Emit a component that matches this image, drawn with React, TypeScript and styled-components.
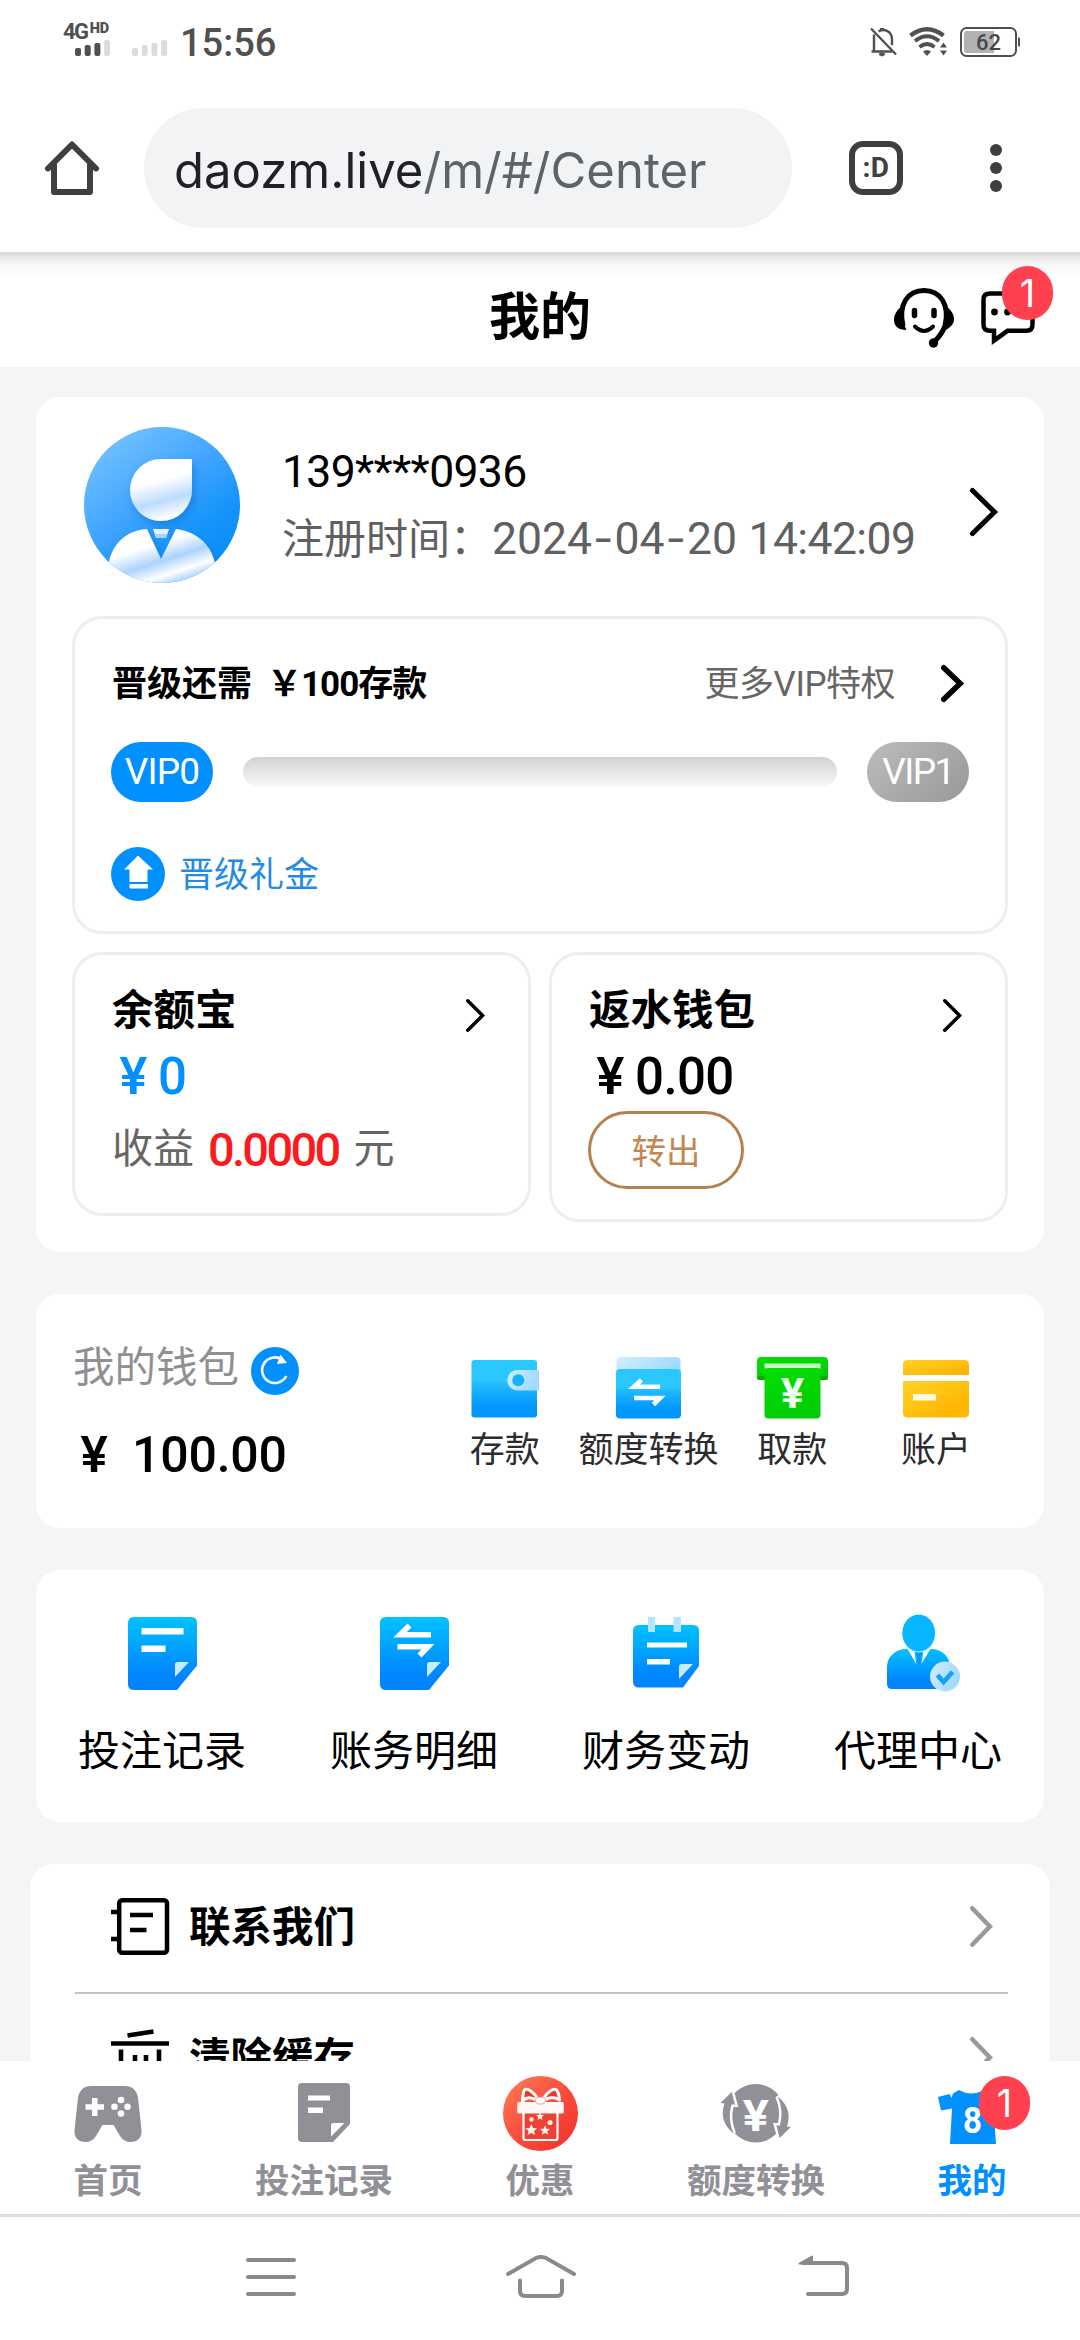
import React from "react";
import styled, { createGlobalStyle } from "styled-components";

const FONT = `Roboto, "Noto Sans CJK SC", sans-serif`;
const BLUE = "#0090ff";

const GlobalStyle = createGlobalStyle`
  * { box-sizing: border-box; }
  body { margin: 0; background: #fff; font-family: ${FONT}; color: #000; }
  #root { height: 2340px; }
  svg { display: block; flex: none; overflow: visible; }
`;

const Screen = styled.div`
  width: 1080px;
  height: 2340px;
  display: flex;
  flex-direction: column;
  overflow: hidden;
  background: #fff;
`;

/* ---------- status bar ---------- */

const StatusBar = styled.div`
  height: 84px;
  flex: none;
  display: flex;
  justify-content: space-between;
  align-items: flex-start;
  padding: 23px 60px 0 63px;
  color: #505050;
`;
const StatusGroup = styled.div`
  display: flex;
  align-items: flex-start;
`;
const StatusIcons = styled(StatusGroup)`
  gap: 12px;
  padding-top: 4px;
`;
const Signal = styled.div`
  width: 117px;
  height: 34px;
`;
const NetworkLabel = styled.div`
  font: 700 22px/18px ${FONT};
  letter-spacing: -1.5px;
  height: 16px;
  display: flex;
`;
const HdMark = styled.span`
  font: 900 14.5px/11px ${FONT};
  letter-spacing: 0;
  margin-left: 2px;
`;
const Clock = styled.div`
  font: 500 38px/40px ${FONT};
`;

/* ---------- browser toolbar ---------- */

const Toolbar = styled.div`
  height: 168px;
  flex: none;
  display: flex;
  align-items: center;
  padding: 0 78px 0 45px;
`;
const AddressBar = styled.div`
  width: 648px;
  height: 120px;
  margin: 0 57px 0 45px;
  padding-left: 30px;
  border-radius: 60px;
  background: #f1f3f5;
  color: #5f6368;
  font: 400 49px/126px Inter, sans-serif;
  letter-spacing: 0.03px;
  white-space: nowrap;
`;
const Host = styled.span`
  color: #202124;
`;
const TabSwitcher = styled.div`
  width: 54px;
  height: 54px;
  border: 6px solid #3c4043;
  border-radius: 14px;
  color: #3c4043;
  font: 700 28px/42px ${FONT};
  letter-spacing: 0.5px;
  text-align: center;
  margin-right: 87px;
`;

/* ---------- page header ---------- */

const PageHeader = styled.div`
  height: 115px;
  flex: none;
  display: grid;
  grid-template-columns: 1fr auto 1fr;
  background: linear-gradient(#d6d6d6 0, #ececec 6px, #f8f8f8 14px, #fff 24px);
`;
const PageTitle = styled.h1`
  grid-column: 2;
  margin: 0;
  font: 700 51px/132px ${FONT};
`;
const HeaderActions = styled.div`
  display: flex;
  justify-content: flex-end;
  gap: 27px;
  padding: 36px 45px 0 0;
`;
const BadgeHost = styled.div`
  position: relative;
`;
const Badge = styled.span<{ $left: number; $top: number }>`
  position: absolute;
  left: ${(p) => p.$left}px;
  top: ${(p) => p.$top}px;
  width: 51px;
  height: 54px;
  border-radius: 26px;
  background: #ff404f;
  color: #fff;
  font: 400 38px/54px Inter, sans-serif;
  text-align: center;
`;

/* ---------- content ---------- */

const Content = styled.main`
  height: 1694px;
  flex: none;
  overflow: hidden;
  display: flex;
  flex-direction: column;
  background: #f4f5f7;
  padding: 30px 36px 0;
`;
const Card = styled.section`
  flex: none;
  background: #fff;
  border-radius: 24px;
`;
const ProfileCard = styled(Card)`
  height: 855px;
  padding: 30px 36px 0;
`;
const Profile = styled.div`
  display: flex;
  height: 189px;
  padding: 0 10px 0 12px;
`;
const ProfileText = styled.div`
  flex: 1;
  padding: 19px 0 0 42px;
`;
const Phone = styled.div`
  font: 400 44.5px/52px ${FONT};
  letter-spacing: -0.65px;
`;
const Registered = styled.div`
  margin-top: 14px;
  font: 400 42px/52px ${FONT};
  color: #606062;
  white-space: nowrap;
`;
const RegisteredDate = styled.span`
  font-size: 44.5px;
`;
const DateDash = styled.span`
  font-family: Inter, sans-serif;
  margin: 0 1px;
`;
const RegisteredTime = styled.span`
  font-size: 44.5px;
  letter-spacing: -0.6px;
  margin-left: 1px;
`;
const ProfileArrow = styled.div`
  padding-top: 61px;
`;

const Panel = styled.div`
  border: 3px solid #eee;
  border-radius: 30px;
`;
const VipPanel = styled(Panel)`
  height: 318px;
  padding: 43px 36px 0;
`;
const VipHead = styled.div`
  display: flex;
  justify-content: space-between;
  align-items: center;
  height: 46px;
  padding-right: 5px;
  font: 400 35px/46px ${FONT};
`;
const VipNeed = styled.div`
  display: flex;
  gap: 15px;
  padding-left: 1px;
  font-weight: 700;
`;
const VipAmount = styled.span`
  font-weight: 700;
  letter-spacing: -1px;
`;
const VipMore = styled.div`
  display: flex;
  align-items: center;
  gap: 46px;
  color: #666;
  letter-spacing: -0.5px;
`;
const VipArrow = styled.div`
  padding-bottom: 4px;
`;
const VipTrack = styled.div`
  display: flex;
  align-items: center;
  justify-content: space-between;
  margin-top: 34px;
`;
const VipLevel = styled.span<{ $active?: boolean }>`
  width: 102px;
  height: 60px;
  border-radius: 30px;
  background: ${(p) => (p.$active ? BLUE : "linear-gradient(135deg, #bcbcbc, #989898)")};
  color: #fff;
  font: 400 37px/60px ${FONT};
  letter-spacing: ${(p) => (p.$active ? -0.8 : -1.6)}px;
  text-align: center;
`;
const VipBar = styled.span`
  width: 594px;
  height: 30px;
  border-radius: 15px;
  background: linear-gradient(#d2d2d2, #fafafa);
`;
const VipGift = styled.div`
  display: flex;
  align-items: center;
  gap: 14px;
  margin-top: 43px;
  color: #1f8ce6;
  font: 400 35px/54px ${FONT};
`;
const VipGiftLabel = styled.span`
  padding-top: 4px;
`;

const Wallets = styled.div`
  display: grid;
  grid-template-columns: 1fr 1fr;
  align-items: start;
  gap: 18px;
  margin-top: 18px;
`;
const WalletPanel = styled(Panel)<{ $height: number }>`
  height: ${(p) => p.$height}px;
  padding: 28px 43px 0 37px;
`;
const WalletHead = styled.div`
  display: flex;
  justify-content: space-between;
  align-items: center;
  height: 56px;
  font: 700 41.5px/56px ${FONT};
`;
const WalletArrow = styled.div`
  padding-top: 8px;
`;
const WalletSum = styled.div<{ $color: string }>`
  height: 61px;
  padding-left: 7px;
  color: ${(p) => p.$color};
  font: 500 51px/74px ${FONT};
  letter-spacing: -0.6px;
  display: flex;
  align-items: baseline;
`;
const Yen = styled.span`
  display: inline-block;
  width: 39px;
  font-family: Inter, sans-serif;
  font-weight: 600;
`;
const Income = styled.div`
  display: flex;
  margin-top: 24px;
  color: #666;
  font: 400 41px/50px ${FONT};
`;
const IncomeValue = styled.span`
  margin: 0 15px 0 14px;
  color: #fb1a1e;
  font: 500 47px/52px ${FONT};
  letter-spacing: -2.7px;
`;
const TransferOut = styled.button`
  display: block;
  width: 156px;
  height: 78px;
  margin: 11px 0 0 -1px;
  padding: 0;
  border: 3px solid #b5804f;
  border-radius: 39px;
  background: #fff;
  color: #c48650;
  font: 400 34.5px/76px ${FONT};
`;

const BalanceCard = styled(Card)`
  height: 234px;
  margin-top: 42px;
  padding-left: 37px;
  display: flex;
`;
const Balance = styled.div`
  width: 360px;
  padding-top: 47px;
`;
const BalanceLabel = styled.div`
  display: flex;
  gap: 12px;
  color: #909094;
  font: 400 41.5px/54px ${FONT};
`;
const RefreshIcon = styled.div`
  padding-top: 6px;
`;
const BalanceSum = styled.div`
  display: flex;
  align-items: baseline;
  gap: 13px;
  margin-top: 32px;
  padding-left: 7px;
  font: 500 50px/54px ${FONT};
  letter-spacing: -0.2px;
`;
const WalletActions = styled.div`
  flex: 1;
  display: grid;
  grid-template-columns: repeat(4, 1fr);
  margin-right: 36px;
`;
const WalletAction = styled.div`
  display: flex;
  flex-direction: column;
  align-items: center;
  padding-top: 63px;
  color: #2c2c2e;
  font: 400 35px/46px ${FONT};
  white-space: nowrap;
`;
const ActionIcon = styled.div`
  height: 71px;
`;

const MenuCard = styled(Card)`
  height: 252px;
  margin-top: 42px;
  display: grid;
  grid-template-columns: repeat(4, 1fr);
`;
const MenuItem = styled.div`
  display: flex;
  flex-direction: column;
  align-items: center;
  padding-top: 45px;
  font: 400 42px/56px ${FONT};
`;
const MenuIcon = styled.div`
  height: 109px;
  padding-top: 2px;
`;

const ListCard = styled(Card)`
  height: 300px;
  margin: 42px -6px 0;
  padding: 0 42px 0 45px;
`;
const ListRow = styled.div<{ $divider?: boolean }>`
  display: flex;
  align-items: center;
  height: 130px;
  padding: 0 15px 4px 36px;
  border-bottom: ${(p) => (p.$divider ? "2px solid #c4c4c6" : "0")};
`;
const ListLabel = styled.div`
  flex: 1;
  margin-left: 20px;
  padding-top: 3px;
  font: 700 41.5px/60px ${FONT};
`;

/* ---------- bottom tabs ---------- */

const TabBar = styled.nav`
  height: 156px;
  flex: none;
  display: grid;
  grid-template-columns: repeat(5, 1fr);
  border-bottom: 3px solid #dedee0;
  background: #fff;
`;
const Tab = styled.div<{ $active?: boolean }>`
  display: flex;
  flex-direction: column;
  align-items: center;
  color: ${(p) => (p.$active ? BLUE : "#909096")};
  font: 700 34.5px/46px ${FONT};
`;
const TabIcon = styled.div<{ $top: number }>`
  height: 97px;
  padding-top: ${(p) => p.$top}px;
  display: flex;
  align-items: flex-start;
`;
const ShirtHost = styled(BadgeHost)`
  margin-right: 10px;
`;

const SystemNav = styled.div`
  height: 123px;
  flex: none;
  display: grid;
  grid-template-columns: 260px 292px auto;
  padding: 38px 0 0 246px;
`;

/* ---------- icons ---------- */

const Chevron = ({ w, h, s, color = "#000" }: { w: number; h: number; s: number; color?: string }) => (
  <svg width={w} height={h}>
    <path
      d={`M${s / 2} ${s / 2} L${w - s * 0.7} ${h / 2} L${s / 2} ${h - s / 2}`}
      fill="none"
      stroke={color}
      strokeWidth={s}
      strokeLinecap="round"
    />
  </svg>
);

const Bars = ({ x, color, last }: { x: number; color: string; last: string }) => (
  <g>
    {[8, 11, 13, 16].map((h, i) => (
      <rect key={h} x={x + i * 9.7} y={17 - h} width={6} height={h} rx={2} fill={i === 3 ? last : color} />
    ))}
  </g>
);

const BellOff = () => (
  <svg width="27" height="30" viewBox="0 0 27 30" fill="none" stroke="#505050" strokeWidth="2.4">
    <path d="M1 1.5 L26 27.5" />
    <path d="M4 7.5V24.5M1.5 24.5H22M8.5 4.5C13 1.500 22 3 22 12.500V18" />
    <path d="M9.500 27h5l-2.500 1.200z" fill="#505050" />
    <path d="M12 1v2" strokeWidth="4" />
  </svg>
);

const Wifi = () => (
  <svg width="39" height="30" viewBox="0 0 39 30" fill="none" stroke="#505050">
    <path d="M1.500 8.500Q18 -4 34.500 8.500" strokeWidth="4.200" />
    <path d="M6 14Q18 4.500 30 14" strokeWidth="4" />
    <path d="M10.500 20Q18 14 25.500 20" strokeWidth="3.800" />
    <path d="M14 24.500Q18 21.500 22 24.500L18 29z" fill="#505050" stroke="none" />
    <path d="M31 20.500l3.500-5 3.500 5zM31 23.500l3.500 5 3.500-5z" fill="#505050" stroke="none" />
  </svg>
);

const Battery = () => (
  <svg width="60" height="30" viewBox="0 0 60 30">
    <rect x="1" y="1" width="55" height="28" rx="5.500" fill="#fff" stroke="#505050" strokeWidth="2" />
    <path d="M6.500 4H34V26H6.500Q4 26 4 23.500V6.500Q4 4 6.500 4Z" fill="#b2b2b2" />
    <path d="M58 10.500h1q1 0 1 1v7q0 1-1 1h-1z" fill="#505050" />
    <text x="28.500" y="23" textAnchor="middle" fontFamily="Roboto" fontSize="22" fontWeight="500" fill="#484848">
      62
    </text>
  </svg>
);

const HomeOutline = () => (
  <svg width="54" height="54" viewBox="0 0 54 54" fill="none" stroke="#3c4043" strokeWidth="6" strokeLinejoin="round" strokeLinecap="round">
    <path d="M3 27.500L27 3.500L51 27.500" />
    <path d="M9 24V51H45V24" />
  </svg>
);

const MoreDots = () => (
  <svg width="12" height="48" viewBox="0 0 12 48" fill="#3c4043">
    <circle cx="6" cy="6" r="6" />
    <circle cx="6" cy="24" r="6" />
    <circle cx="6" cy="42" r="6" />
  </svg>
);

const Headset = () => (
  <svg width="60" height="60" viewBox="0 0 60 60" fill="none" stroke="#000">
    <path d="M9 38C4 16 14 2.500 30 2.500S56 16 51 38Q48 46 41 53" strokeWidth="5" />
    <path d="M9 17C3 22 0 26 0 32C0 38 4 42 12.500 42C10 37 9.500 31 9 17Z" fill="#000" stroke="none" />
    <path d="M51 17C57 22 60 26 60 31.500C60 36 56 40 51 42C50 36 51 31 51 17Z" fill="#000" stroke="none" />
    <circle cx="39.500" cy="55" r="4.700" fill="#000" stroke="none" />
    <path d="M20.500 22.500v5M40 22.500v5" strokeWidth="5.500" strokeLinecap="round" />
    <path d="M21 38.500Q30 47.500 39 38.500" strokeWidth="4" strokeLinecap="round" />
  </svg>
);

const Chat = () => (
  <svg width="54" height="60" viewBox="0 0 54 60" fill="none" stroke="#000" strokeWidth="4.500">
    <path d="M9 5.500H45.500Q51.500 5.500 51.500 11.500V36.500Q51.500 42.800 45.500 42.800H26.500L13 52.500V42.800H9Q2.500 42.800 2.500 36.500V11.500Q2.500 5.500 9 5.500Z" />
    <circle cx="13.500" cy="24" r="3.400" fill="#000" stroke="none" />
    <circle cx="26.500" cy="24" r="3.400" fill="#000" stroke="none" />
  </svg>
);

const Avatar = () => (
  <svg width="156" height="156" viewBox="0 0 156 156">
    <defs>
      <linearGradient id="avBg" x1="0.150" y1="0.050" x2="0.800" y2="0.950">
        <stop offset="0" stopColor="#74c2ff" />
        <stop offset="0.450" stopColor="#40a4ff" />
        <stop offset="0.750" stopColor="#1594fb" />
        <stop offset="1" stopColor="#0a8cf5" />
      </linearGradient>
      <linearGradient id="avHead" x1="0.350" y1="0" x2="0.620" y2="1">
        <stop offset="0.350" stopColor="#fff" />
        <stop offset="0.680" stopColor="#bcdcfe" />
        <stop offset="0.950" stopColor="#fff" />
      </linearGradient>
      <linearGradient id="avBody" gradientUnits="userSpaceOnUse" x1="68" y1="100" x2="86" y2="156">
        <stop offset="0.300" stopColor="#fff" />
        <stop offset="0.600" stopColor="#acd3fc" />
        <stop offset="0.850" stopColor="#fff" />
        <stop offset="1" stopColor="#b5d8fd" />
      </linearGradient>
      <clipPath id="avClip">
        <circle cx="78" cy="78" r="78" />
      </clipPath>
      <filter id="avShadow" x="-0.200" y="-0.200" width="1.500" height="1.500">
        <feDropShadow dx="3" dy="5" stdDeviation="4" floodColor="#0868c8" floodOpacity="0.450" />
      </filter>
    </defs>
    <circle cx="78" cy="78" r="78" fill="url(#avBg)" />
    <g clipPath="url(#avClip)">
      <path d="M24 160C20 122 38 104 63 102L77 132L92 102C116 105 136 122 132 160Z" fill="url(#avBody)" filter="url(#avShadow)" />
    </g>
    <path d="M108 32V63A31 31 0 1 1 77 32Z" fill="url(#avHead)" filter="url(#avShadow)" />
    <path d="M69 102H85L82 111H72Z" fill="#e4f2ff" />
    <path d="M71.500 107H83.500L82 111H72.500Z" fill="#a8d3fb" />
  </svg>
);

const UpIcon = () => (
  <svg width="54" height="54" viewBox="0 0 54 54">
    <circle cx="27" cy="27" r="27" fill={BLUE} />
    <path d="M27 8.500L42 22.500H36.500V35H18.500V22.500H13Z" fill="#fff" />
    <rect x="18.500" y="37" width="18.500" height="4.500" rx="1" fill="#fff" />
  </svg>
);

const Refresh = () => (
  <svg width="48" height="48" viewBox="0 0 48 48">
    <circle cx="24" cy="24" r="24" fill={BLUE} />
    <path d="M31 12.500A12.800 12.800 0 1 0 35.300 29" fill="none" stroke="#fff" strokeWidth="2.600" />
    <path d="M29.500 7.500L36 16L26 17Z" fill="#fff" />
  </svg>
);

const BlueGradients = () => (
  <defs>
    <linearGradient id="skyBlue" x1="0" y1="0" x2="0" y2="1">
      <stop offset="0.350" stopColor="#2ac8ff" />
      <stop offset="0.450" stopColor="#1fb8ff" />
      <stop offset="0.800" stopColor="#0098ff" />
    </linearGradient>
    <linearGradient id="deepBlue" x1="0" y1="0" x2="0" y2="1">
      <stop offset="0" stopColor="#00c2ff" />
      <stop offset="0.800" stopColor="#0085ff" />
      <stop offset="1" stopColor="#0085ff" />
    </linearGradient>
    <linearGradient id="paleBlue" x1="0" y1="0" x2="1" y2="0.400">
      <stop offset="0" stopColor="#d4eeff" />
      <stop offset="1" stopColor="#9fdaff" />
    </linearGradient>
    <linearGradient id="cardGreen" x1="0.200" y1="0" x2="0.500" y2="1">
      <stop offset="0" stopColor="#04de00" />
      <stop offset="1" stopColor="#00cc08" />
    </linearGradient>
    <linearGradient id="cardGold" x1="0" y1="0" x2="0.800" y2="0.800">
      <stop offset="0" stopColor="#ffd22c" />
      <stop offset="1" stopColor="#ffb600" />
    </linearGradient>
  </defs>
);

const DepositIcon = () => (
  <svg width="68" height="60" viewBox="0 0 68 60">
    <BlueGradients />
    <rect x="0.500" y="3" width="65.500" height="57.500" rx="3" fill="url(#skyBlue)" />
    <path d="M68 13H46.500a10.200 10.200 0 0 0 0 20.500H68z" fill="url(#paleBlue)" />
    <circle cx="47.300" cy="23.200" r="6" fill="#15b2ff" />
  </svg>
);

const ConvertIcon = () => (
  <svg width="65" height="61" viewBox="0 0 65 61">
    <path d="M4 0H60Q64 0 64.500 4V18H0.500V4Q0.500 0 4 0Z" fill="url(#paleBlue)" />
    <rect x="0" y="12" width="65" height="49.500" rx="4" fill="url(#skyBlue)" />
    <path d="M44 29.800H18L25.500 23M18 41H44L37.500 47.500" fill="none" stroke="#fff" strokeWidth="4.600" />
  </svg>
);

const WithdrawIcon = () => (
  <svg width="71" height="61" viewBox="0 0 71 61">
    <rect x="0" y="0" width="71" height="23" rx="4" fill="url(#cardGreen)" />
    <rect x="0" y="19" width="71" height="4" rx="2" fill="#0aa80a" />
    <rect x="7.500" y="6.500" width="56" height="5" fill="#c9f8c6" />
    <rect x="7.500" y="11" width="56" height="50.500" rx="4" fill="url(#cardGreen)" />
    <text x="35.600" y="50.500" textAnchor="middle" fontFamily="Inter" fontSize="41" fontWeight="700" fill="#f1fff0" textLength="24" lengthAdjust="spacingAndGlyphs">
      ¥
    </text>
  </svg>
);

const AccountIcon = () => (
  <svg width="66" height="60" viewBox="0 0 66 60">
    <path d="M4.500 3H61.500Q66 3 66 8V18H0V8Q0 3 4.500 3Z" fill="url(#cardGold)" />
    <path d="M0 24H66V55.500Q66 60.500 61.500 60.500H4.500Q0 60.500 0 55.500Z" fill="url(#cardGold)" />
    <rect x="10" y="37" width="23" height="6.500" fill="#fffbe0" />
  </svg>
);

const DOC = "M6 0H63Q69 0 69 6V48.500L49 73H6Q0 73 0 67V6Q0 0 6 0Z";

const BetIcon = () => (
  <svg width="69" height="73" viewBox="0 0 69 73">
    <path d={DOC} fill="url(#deepBlue)" />
    <path d="M13.500 11h42v6.500h-42zM13.500 28.500h24V35h-24z" fill="#fff" />
    <path d="M47 47.500q0-2.500 2.500-2.500H61L47 60z" fill="#c8ecff" />
  </svg>
);

const LedgerIcon = () => (
  <svg width="69" height="73" viewBox="0 0 69 73">
    <path d={DOC} fill="url(#deepBlue)" />
    <path d="M51 17.800H20L29.500 8.500M17.500 29.700H48L39.500 38.500" fill="none" stroke="#fff" strokeWidth="5.500" />
    <path d="M47 47.500q0-2.500 2.500-2.500H61L47 60z" fill="#c8ecff" />
  </svg>
);

const FinanceIcon = () => (
  <svg width="66" height="73" viewBox="0 0 66 73">
    <path d="M6 8H60Q66 8 66 14V49L50 70.500H6Q0 70.500 0 64.500V14Q0 8 6 8Z" fill="url(#deepBlue)" />
    <path d="M15 0h7v15h-7zM40.500 0h7.500v15h-7.500z" fill="#b4e4ff" />
    <path d="M14 25.500h40v5H14zM14 42h23v5.500H14z" fill="#fff" />
    <path d="M46 49.500q0-2.500 2.500-2.500H60L46 62z" fill="#c8ecff" />
  </svg>
);

const AgentIcon = () => (
  <svg width="63" height="74" viewBox="0 2 63 74">
    <path d="M5 74Q0 74 0 69V52C0 41 9 34 19.500 34H44C55 34 63 42 63 52V74Z" fill="url(#deepBlue)" />
    <path d="M20 33L29.500 49.500L27.500 37H36.500L34 49.500L44 33Z" fill="#fff" />
    <path d="M29 38H35L33.500 42L34.500 48L32 50L29.500 48L30.500 42Z" fill="#0598ff" />
    <ellipse cx="31.700" cy="18.500" rx="16.500" ry="19" fill="#9fe0ff" />
    <ellipse cx="31.700" cy="18" rx="16.300" ry="18.300" fill="#06b6ff" />
    <circle cx="58" cy="61.500" r="15" fill="url(#paleBlue)" />
    <path d="M50.500 60L56.500 67L65.500 57" fill="none" stroke="#10a2f5" strokeWidth="4.600" />
  </svg>
);

const ContactIcon = () => (
  <svg width="58" height="57" viewBox="0 0 58 57" fill="none" stroke="#000" strokeWidth="4.500">
    <rect x="8.200" y="2.200" width="47.800" height="52.500" rx="3" />
    <path d="M0 14h8M0 41h8" />
    <path d="M19 17h23M19 32h16.500" />
  </svg>
);

const TrashIcon = () => (
  <svg width="58" height="57" viewBox="0 0 58 57" fill="none" stroke="#000" strokeWidth="4.600">
    <path d="M16.500 6.500L42.500 2.500M0 14.500h58M10 20.500V54.500H48V20.500M24 26v20M35 26v20" />
  </svg>
);

const Gamepad = () => (
  <svg width="68" height="56" viewBox="0 0 68 56">
    <path
      d="M17 0H51Q62 0 64 12L67.500 44Q68 56 56 56Q50 56 46 50L39.500 39H28.500L22 50Q18 56 12 56Q0 56 0.500 44L4 12Q6 0 17 0Z"
      fill="#909096"
    />
    <path d="M20.800 12v18M11.500 21h18.500" stroke="#fff" strokeWidth="5.500" />
    <g fill="#fff">
      <circle cx="47" cy="14" r="3.300" />
      <circle cx="47" cy="27.500" r="3.300" />
      <circle cx="40.500" cy="20.700" r="3.300" />
      <circle cx="53.500" cy="20.700" r="3.300" />
    </g>
  </svg>
);

const DocGray = () => (
  <svg width="52" height="59" viewBox="0 0 52 59">
    <path d="M4 0H48Q52 0 52 4V41L35 59H4Q0 59 0 55V4Q0 0 4 0Z" fill="#909096" />
    <path d="M10 12.500h22v5H10zM10 24.500h15v5.500H10z" fill="#fff" />
    <path d="M33 42q0-2 2-2H46.500L33 53.500z" fill="#fff" />
  </svg>
);

const STAR = "M0 -1L.3 -.35L1 -.3L.47 .15L.62 .85L0 .48L-.62 .85L-.47 .15L-1 -.3L-.3 -.35Z";

const GiftIcon = () => (
  <svg width="75" height="75" viewBox="0 0 75 75">
    <defs>
      <linearGradient id="giftRed" x1="0.100" y1="0.100" x2="0.900" y2="0.900">
        <stop offset="0" stopColor="#ff7350" />
        <stop offset="0.550" stopColor="#f84a3c" />
        <stop offset="1" stopColor="#f5352f" />
      </linearGradient>
    </defs>
    <circle cx="37.500" cy="37.500" r="37.500" fill="url(#giftRed)" />
    <g fill="none" stroke="#fff" strokeLinejoin="round">
      <rect x="20.500" y="36" width="34" height="28" rx="2" strokeWidth="2.200" fill="#ee4035" />
      <path d="M35 23C30 15 24 12 21.500 14Q20 16 19.500 25Q25 19 33 24" strokeWidth="3" fill="#e9392f" />
      <path d="M40 23C45 15 51 12 53.500 14Q56 17 56.500 24Q49 19 42 24" strokeWidth="3" fill="#e9392f" />
    </g>
    <rect x="14.300" y="26" width="46.500" height="11.500" rx="1.500" fill="#fff8f4" />
    <ellipse cx="37.500" cy="24.500" rx="5.300" ry="3.600" fill="#fff" stroke="#f0806c" strokeWidth="0.800" />
    <g fill="#ffeee8">
      <path d={STAR} transform="translate(28.300 54) scale(6)" />
      <path d={STAR} transform="translate(42 54.500) scale(5)" />
      <path d={STAR} transform="translate(37 40.500) scale(4)" />
      <circle cx="28.500" cy="43.500" r="2.200" />
      <circle cx="47" cy="46.500" r="2.600" />
    </g>
  </svg>
);

const SWEEP = "M12.700 49.700C1 40 0 29 3.500 19.500L-0.500 19L10.700 8L14 20.500H10.500C8 29 8 39 12.700 49.700Z";

const ExchangeIcon = () => (
  <svg width="70" height="59" viewBox="0 0 70 59">
    <circle cx="34.700" cy="29.200" r="29.200" fill="#909096" />
    <g fill="#909096" stroke="#fff" strokeWidth="5" paintOrder="stroke">
      <path d={SWEEP} />
      <path d={SWEEP} transform="rotate(180 34.700 31)" />
    </g>
    <text x="34.700" y="46.500" textAnchor="middle" fontFamily="Inter" fontSize="42" fontWeight="700" fill="#fff" textLength="27" lengthAdjust="spacingAndGlyphs">
      ¥
    </text>
  </svg>
);

const ShirtIcon = () => (
  <svg width="58" height="54" viewBox="0 0 58 54">
    <path
      d="M0 7L11.500 4L13.500 8L15 3.500L21 0Q33 7 46 0L67 7L64 20.500L55.500 18.500L58 54H12L14 18.500L3 20.500Z"
      fill={BLUE}
    />
    <text x="34.500" y="43" textAnchor="middle" fontFamily="Roboto" fontSize="37" fontWeight="700" fill="#fff" textLength="19" lengthAdjust="spacingAndGlyphs">
      8
    </text>
  </svg>
);

const NavMenu = () => (
  <svg width="50" height="43" viewBox="0 0 50 43" stroke="#8a8a8a" strokeWidth="4" strokeLinecap="round">
    <path d="M2 5h46M2 22h46M2 39h46" />
  </svg>
);
const NavHome = () => (
  <svg width="70" height="43" viewBox="0 0 70 43" fill="none" stroke="#8a8a8a" strokeWidth="4" strokeLinecap="round">
    <path d="M2 19L30 3Q35 1 40 3L68 19" />
    <path d="M14 25.500V36Q14 41 19 41H51Q56 41 56 36V25.500" />
  </svg>
);
const NavBack = () => (
  <svg width="51" height="43" viewBox="0 0 51 43" fill="none" stroke="#8a8a8a" strokeWidth="4" strokeLinecap="round">
    <path d="M5 8H44Q49 8 49 13V34Q49 39 44 39H10" />
    <path d="M1.500 8.500L14 1.500V9Z" fill="#8a8a8a" strokeWidth="2" strokeLinejoin="round" />
  </svg>
);

/* ---------- data ---------- */

const walletActions = [
  { label: "存款", Icon: DepositIcon },
  { label: "额度转换", Icon: ConvertIcon },
  { label: "取款", Icon: WithdrawIcon },
  { label: "账户", Icon: AccountIcon },
];

const menuItems = [
  { label: "投注记录", Icon: BetIcon },
  { label: "账务明细", Icon: LedgerIcon },
  { label: "财务变动", Icon: FinanceIcon },
  { label: "代理中心", Icon: AgentIcon },
];

const tabs = [
  { label: "首页", Icon: Gamepad, top: 25 },
  { label: "投注记录", Icon: DocGray, top: 22 },
  { label: "优惠", Icon: GiftIcon, top: 15 },
  { label: "额度转换", Icon: ExchangeIcon, top: 23 },
];

export default function App() {
  return (
    <Screen>
      <GlobalStyle />
      <StatusBar>
        <StatusGroup>
          <Signal>
            <NetworkLabel>
              4G<HdMark>HD</HdMark>
            </NetworkLabel>
            <svg width="117" height="17" viewBox="0 0 117 17">
              <Bars x={12} color="#505050" last="#dcdcdc" />
              <Bars x={69} color="#dcdcdc" last="#dcdcdc" />
            </svg>
          </Signal>
          <Clock>15:56</Clock>
        </StatusGroup>
        <StatusIcons>
          <BellOff />
          <Wifi />
          <Battery />
        </StatusIcons>
      </StatusBar>

      <Toolbar>
        <HomeOutline />
        <AddressBar>
          <Host>daozm.live</Host>/m/#/Center
        </AddressBar>
        <TabSwitcher>:D</TabSwitcher>
        <MoreDots />
      </Toolbar>

      <PageHeader>
        <PageTitle>我的</PageTitle>
        <HeaderActions>
          <Headset />
          <BadgeHost>
            <Chat />
            <Badge $left={21} $top={-22}>1</Badge>
          </BadgeHost>
        </HeaderActions>
      </PageHeader>

      <Content>
        <ProfileCard>
          <Profile>
            <Avatar />
            <ProfileText>
              <Phone>139****0936</Phone>
              <Registered>
                注册时间：
                <RegisteredDate>
                  2024<DateDash>-</DateDash>04<DateDash>-</DateDash>20
                </RegisteredDate>{" "}
                <RegisteredTime>14:42:09</RegisteredTime>
              </Registered>
            </ProfileText>
            <ProfileArrow>
              <Chevron w={28} h={48} s={5} />
            </ProfileArrow>
          </Profile>

          <VipPanel>
            <VipHead>
              <VipNeed>
                <span>晋级还需</span>
                <VipAmount>￥100存款</VipAmount>
              </VipNeed>
              <VipMore>
                更多VIP特权
                <VipArrow>
                  <Chevron w={23} h={37} s={5.5} />
                </VipArrow>
              </VipMore>
            </VipHead>
            <VipTrack>
              <VipLevel $active>VIP0</VipLevel>
              <VipBar />
              <VipLevel>VIP1</VipLevel>
            </VipTrack>
            <VipGift>
              <UpIcon />
              <VipGiftLabel>晋级礼金</VipGiftLabel>
            </VipGift>
          </VipPanel>

          <Wallets>
            <WalletPanel $height={264}>
              <WalletHead>
                余额宝
                <WalletArrow>
                  <Chevron w={19} h={33} s={3.5} />
                </WalletArrow>
              </WalletHead>
              <WalletSum $color={BLUE}>
                <Yen>¥</Yen>0
              </WalletSum>
              <Income>
                收益<IncomeValue>0.0000</IncomeValue>元
              </Income>
            </WalletPanel>
            <WalletPanel $height={270}>
              <WalletHead>
                返水钱包
                <WalletArrow>
                  <Chevron w={19} h={33} s={3.5} />
                </WalletArrow>
              </WalletHead>
              <WalletSum $color="#000">
                <Yen>¥</Yen>0.00
              </WalletSum>
              <TransferOut>转出</TransferOut>
            </WalletPanel>
          </Wallets>
        </ProfileCard>

        <BalanceCard>
          <Balance>
            <BalanceLabel>
              我的钱包
              <RefreshIcon>
                <Refresh />
              </RefreshIcon>
            </BalanceLabel>
            <BalanceSum>
              <Yen>¥</Yen>100.00
            </BalanceSum>
          </Balance>
          <WalletActions>
            {walletActions.map(({ label, Icon }) => (
              <WalletAction key={label}>
                <ActionIcon>
                  <Icon />
                </ActionIcon>
                {label}
              </WalletAction>
            ))}
          </WalletActions>
        </BalanceCard>

        <MenuCard>
          {menuItems.map(({ label, Icon }) => (
            <MenuItem key={label}>
              <MenuIcon>
                <Icon />
              </MenuIcon>
              {label}
            </MenuItem>
          ))}
        </MenuCard>

        <ListCard>
          <ListRow $divider>
            <ContactIcon />
            <ListLabel>联系我们</ListLabel>
            <Chevron w={23} h={41} s={4.5} color="#999" />
          </ListRow>
          <ListRow>
            <TrashIcon />
            <ListLabel>清除缓存</ListLabel>
            <Chevron w={23} h={41} s={4.5} color="#999" />
          </ListRow>
        </ListCard>
      </Content>

      <TabBar>
        {tabs.map(({ label, Icon, top }) => (
          <Tab key={label}>
            <TabIcon $top={top}>
              <Icon />
            </TabIcon>
            {label}
          </Tab>
        ))}
        <Tab $active>
          <TabIcon $top={29}>
            <ShirtHost>
              <ShirtIcon />
              <Badge $left={41} $top={-14}>1</Badge>
            </ShirtHost>
          </TabIcon>
          我的
        </Tab>
      </TabBar>

      <SystemNav>
        <NavMenu />
        <NavHome />
        <NavBack />
      </SystemNav>
    </Screen>
  );
}
